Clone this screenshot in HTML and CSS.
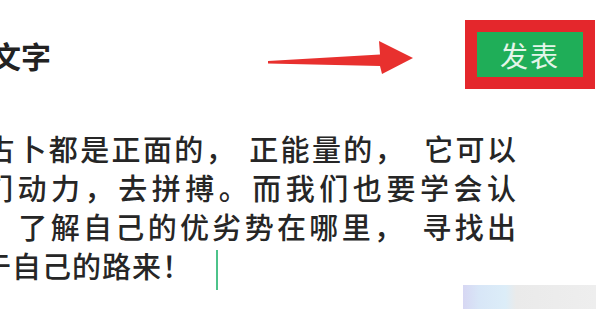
FILE: index.html
```html
<!DOCTYPE html>
<html lang="zh-CN">

<head>
    <meta charset="UTF-8">
    <meta name="viewport" content="width=device-width, initial-scale=1.0">
    <title>发表文字</title>
    <link rel="stylesheet" href="styles.css">
</head>

<body>

    <header class="top">
        <h1 class="title">文字</h1>
        <svg class="arrow" width="148" height="40" viewBox="0 0 148 40">
            <path d="M2 26 L114 19.5 L113 6 L147 23 L116 39 L114 31 L2 28.5 Z" fill="#e8302e" />
        </svg>
        <div class="publish">
            <span class="publish-btn">发表</span>
        </div>
    </header>

    <div class="content">
        <p class="line line-1">占卜都是正面的<span class="pause p1">，</span>正能量的<span class="pause p2">，</span>它可以</p>
        <p class="line line-2">们动力，去拼搏。而我们也要学会认</p>
        <p class="line line-3"><span class="pause p3">，</span>了解自己的优劣势在哪里<span class="pause p4">，</span>寻找出</p>
        <p class="line line-4">于自己的路来！<span class="cursor"></span></p>
    </div>

    <div class="candidates"></div>

</body>
</html>
```

FILE: styles.css
```css
body {
    font-family: "Noto Sans CJK SC", "Noto Sans", sans-serif;
    background-color: #fff;
    margin: 0;
    padding: 0;
    width: 596px;
    height: 309px;
    overflow: hidden;
}

.top {
    display: flex;
    align-items: center;
    padding-top: 20px;
    padding-right: 1px;
}

.title {
    margin: 0 0 0 -9px;
    font-size: 30px;
    font-weight: 700;
    color: #222;
    line-height: 1;
}

.arrow {
    display: block;
    margin-left: auto;
}

.publish {
    margin-left: 51px;
    border: 12px solid #e4272c;
    background-color: #e4272c;
}

.publish-btn {
    display: flex;
    align-items: center;
    justify-content: center;
    width: 106px;
    height: 45px;
    background-color: #1fae58;
    color: #e4f5e9;
    font-size: 28px;
    letter-spacing: 2px;
}

.content {
    margin-top: 40px;
    color: #262626;
    font-size: 29px;
    font-weight: 500;
    line-height: 39px;
}

.line {
    margin: 0 80px 0 0;
    white-space: nowrap;
    text-align: justify;
    text-align-last: justify;
}

.line-1 {
    margin-left: -14px;
}

.line-2 {
    margin-left: -16px;
}

.line-3 {
    margin-left: -30px;
}

.line-4 {
    margin-left: -18px;
    text-align: left;
    text-align-last: left;
    letter-spacing: 1px;
}

.p1 {
    margin-right: 12px;
}

.p2 {
    margin-right: 18px;
}

.p3 {
    margin-right: 16px;
}

.p4 {
    margin-right: 16px;
}

.cursor {
    display: inline-block;
    width: 2px;
    height: 40px;
    margin-left: 24px;
    margin-bottom: -12px;
    background-color: #4cc38a;
}

.candidates {
    width: 133px;
    height: 24px;
    margin-left: auto;
    background: linear-gradient(to right, #d7d7f3 0, #d8e6f7 12%, #dcedf8 32%, #eaeaea 40%, #eeeeee 100%);
}
```
